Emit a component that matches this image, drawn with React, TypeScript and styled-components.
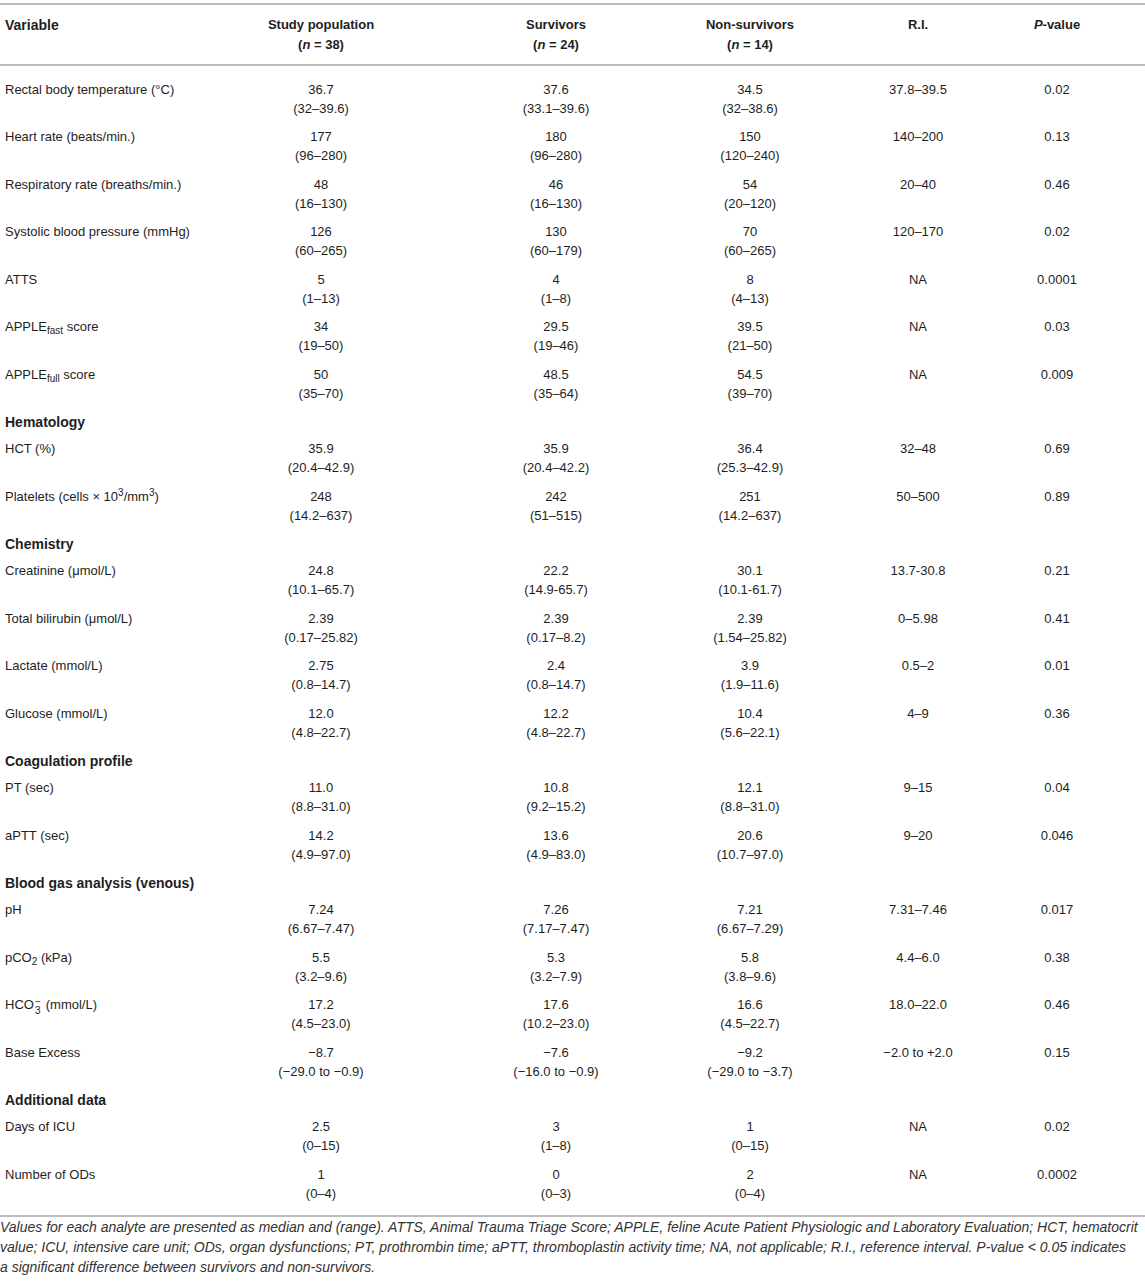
import React from 'react';
import styled, {createGlobalStyle} from 'styled-components';

const GlobalStyle = createGlobalStyle`
	body {
		margin: 0;
		background: #fff;
		color: #1e1e1e;
		font-family: "Liberation Sans", Arial, sans-serif;
	}
`;

const COLS = '163px 306px 164px 224px 112px 166px';

const Page = styled.div`
	width: 1145px;
	padding-top: 3px;
`;

const Table = styled.div`
	border-top: 2px solid #bdbdbd;
	border-bottom: 2px solid #bdbdbd;
`;

const Head = styled.div`
	display: grid;
	grid-template-columns: ${COLS};
	padding: 10px 0 9px 5px;
	border-bottom: 2px solid #bdbdbd;
	font-size: 13px;
	font-weight: bold;
	line-height: 20px;
`;

const HeadCell = styled.div<{$left?: boolean}>`
	text-align: ${p => (p.$left ? 'left' : 'center')};
	white-space: nowrap;
	font-size: ${p => (p.$left ? '14px' : '13px')};
`;

const Body = styled.div`
	padding: 9px 0 7px;
`;

const Row = styled.div`
	display: grid;
	grid-template-columns: ${COLS};
	padding: 4.5px 0 5px 5px;
	font-size: 13px;
	line-height: 19px;
`;

const Cell = styled.div<{$left?: boolean}>`
	text-align: ${p => (p.$left ? 'left' : 'center')};
	white-space: nowrap;
`;

const Section = styled.div`
	padding: 5px 0 3px 5px;
	font-size: 14px;
	font-weight: bold;
	line-height: 19px;
`;

const Sub = styled.sub`
	font-size: 10px;
	line-height: 0;
	vertical-align: -3px;
`;

const Sup = styled.sup`
	font-size: 10px;
	line-height: 0;
	vertical-align: 5px;
`;

const Stack = styled.span`
	display: inline-flex;
	flex-direction: column;
	align-items: center;
	font-size: 10px;
	line-height: 9px;
	vertical-align: 4px;
	margin: 0 5px 0 1px;
`;

const Note = styled.p`
	margin: 0;
	padding: 0;
	font-size: 14px;
	font-style: italic;
	line-height: 20px;
	color: #333;
	white-space: nowrap;
`;

type Line = [string, string];
type DataRow = {label: React.ReactNode; all: Line; surv: Line; non: Line; ri: string; p: string};
type Group = {title?: string; rows: DataRow[]};

const groups: Group[] = [
	{
		rows: [
			{label: 'Rectal body temperature (°C)', all: ['36.7', '(32–39.6)'], surv: ['37.6', '(33.1–39.6)'], non: ['34.5', '(32–38.6)'], ri: '37.8–39.5', p: '0.02'},
			{label: 'Heart rate (beats/min.)', all: ['177', '(96–280)'], surv: ['180', '(96–280)'], non: ['150', '(120–240)'], ri: '140–200', p: '0.13'},
			{label: 'Respiratory rate (breaths/min.)', all: ['48', '(16–130)'], surv: ['46', '(16–130)'], non: ['54', '(20–120)'], ri: '20–40', p: '0.46'},
			{label: 'Systolic blood pressure (mmHg)', all: ['126', '(60–265)'], surv: ['130', '(60–179)'], non: ['70', '(60–265)'], ri: '120–170', p: '0.02'},
			{label: 'ATTS', all: ['5', '(1–13)'], surv: ['4', '(1–8)'], non: ['8', '(4–13)'], ri: 'NA', p: '0.0001'},
			{label: <>APPLE<Sub>fast</Sub> score</>, all: ['34', '(19–50)'], surv: ['29.5', '(19–46)'], non: ['39.5', '(21–50)'], ri: 'NA', p: '0.03'},
			{label: <>APPLE<Sub>full</Sub> score</>, all: ['50', '(35–70)'], surv: ['48.5', '(35–64)'], non: ['54.5', '(39–70)'], ri: 'NA', p: '0.009'}
		]
	},
	{
		title: 'Hematology',
		rows: [
			{label: 'HCT (%)', all: ['35.9', '(20.4–42.9)'], surv: ['35.9', '(20.4–42.2)'], non: ['36.4', '(25.3–42.9)'], ri: '32–48', p: '0.69'},
			{label: <>Platelets (cells × 10<Sup>3</Sup>/mm<Sup>3</Sup>)</>, all: ['248', '(14.2–637)'], surv: ['242', '(51–515)'], non: ['251', '(14.2–637)'], ri: '50–500', p: '0.89'}
		]
	},
	{
		title: 'Chemistry',
		rows: [
			{label: 'Creatinine (μmol/L)', all: ['24.8', '(10.1–65.7)'], surv: ['22.2', '(14.9-65.7)'], non: ['30.1', '(10.1-61.7)'], ri: '13.7-30.8', p: '0.21'},
			{label: 'Total bilirubin (μmol/L)', all: ['2.39', '(0.17–25.82)'], surv: ['2.39', '(0.17–8.2)'], non: ['2.39', '(1.54–25.82)'], ri: '0–5.98', p: '0.41'},
			{label: 'Lactate (mmol/L)', all: ['2.75', '(0.8–14.7)'], surv: ['2.4', '(0.8–14.7)'], non: ['3.9', '(1.9–11.6)'], ri: '0.5–2', p: '0.01'},
			{label: 'Glucose (mmol/L)', all: ['12.0', '(4.8–22.7)'], surv: ['12.2', '(4.8–22.7)'], non: ['10.4', '(5.6–22.1)'], ri: '4–9', p: '0.36'}
		]
	},
	{
		title: 'Coagulation profile',
		rows: [
			{label: 'PT (sec)', all: ['11.0', '(8.8–31.0)'], surv: ['10.8', '(9.2–15.2)'], non: ['12.1', '(8.8–31.0)'], ri: '9–15', p: '0.04'},
			{label: 'aPTT (sec)', all: ['14.2', '(4.9–97.0)'], surv: ['13.6', '(4.9–83.0)'], non: ['20.6', '(10.7–97.0)'], ri: '9–20', p: '0.046'}
		]
	},
	{
		title: 'Blood gas analysis (venous)',
		rows: [
			{label: 'pH', all: ['7.24', '(6.67–7.47)'], surv: ['7.26', '(7.17–7.47)'], non: ['7.21', '(6.67–7.29)'], ri: '7.31–7.46', p: '0.017'},
			{label: <>pCO<Sub>2</Sub> (kPa)</>, all: ['5.5', '(3.2–9.6)'], surv: ['5.3', '(3.2–7.9)'], non: ['5.8', '(3.8–9.6)'], ri: '4.4–6.0', p: '0.38'},
			{label: <>HCO<Stack><span>−</span><span>3</span></Stack>(mmol/L)</>, all: ['17.2', '(4.5–23.0)'], surv: ['17.6', '(10.2–23.0)'], non: ['16.6', '(4.5–22.7)'], ri: '18.0–22.0', p: '0.46'},
			{label: 'Base Excess', all: ['−8.7', '(−29.0 to −0.9)'], surv: ['−7.6', '(−16.0 to −0.9)'], non: ['−9.2', '(−29.0 to −3.7)'], ri: '−2.0 to +2.0', p: '0.15'}
		]
	},
	{
		title: 'Additional data',
		rows: [
			{label: 'Days of ICU', all: ['2.5', '(0–15)'], surv: ['3', '(1–8)'], non: ['1', '(0–15)'], ri: 'NA', p: '0.02'},
			{label: 'Number of ODs', all: ['1', '(0–4)'], surv: ['0', '(0–3)'], non: ['2', '(0–4)'], ri: 'NA', p: '0.0002'}
		]
	}
];

const Pair = ({v}: {v: Line}) => (
	<Cell>{v[0]}<br/>{v[1]}</Cell>
);

const App = (): JSX.Element => (
	<Page>
		<GlobalStyle/>
		<Table>
			<Head>
				<HeadCell $left>Variable</HeadCell>
				<HeadCell>Study population<br/>(<i>n</i> = 38)</HeadCell>
				<HeadCell>Survivors<br/>(<i>n</i> = 24)</HeadCell>
				<HeadCell>Non-survivors<br/>(<i>n</i> = 14)</HeadCell>
				<HeadCell>R.I.</HeadCell>
				<HeadCell><i>P</i>-value</HeadCell>
			</Head>
			<Body>
				{groups.map((g, gi) => (
					<React.Fragment key={gi}>
						{g.title && <Section>{g.title}</Section>}
						{g.rows.map((r, ri) => (
							<Row key={ri}>
								<Cell $left>{r.label}</Cell>
								<Pair v={r.all}/>
								<Pair v={r.surv}/>
								<Pair v={r.non}/>
								<Cell>{r.ri}</Cell>
								<Cell>{r.p}</Cell>
							</Row>
						))}
					</React.Fragment>
				))}
			</Body>
		</Table>
		<Note>
			Values for each analyte are presented as median and (range). ATTS, Animal Trauma Triage Score; APPLE, feline Acute Patient Physiologic and Laboratory Evaluation; HCT, hematocrit<br/>
			value; ICU, intensive care unit; ODs, organ dysfunctions; PT, prothrombin time; aPTT, thromboplastin activity time; NA, not applicable; R.I., reference interval. P-value &lt; 0.05 indicates<br/>
			a significant difference between survivors and non-survivors.
		</Note>
	</Page>
);

export default App;
